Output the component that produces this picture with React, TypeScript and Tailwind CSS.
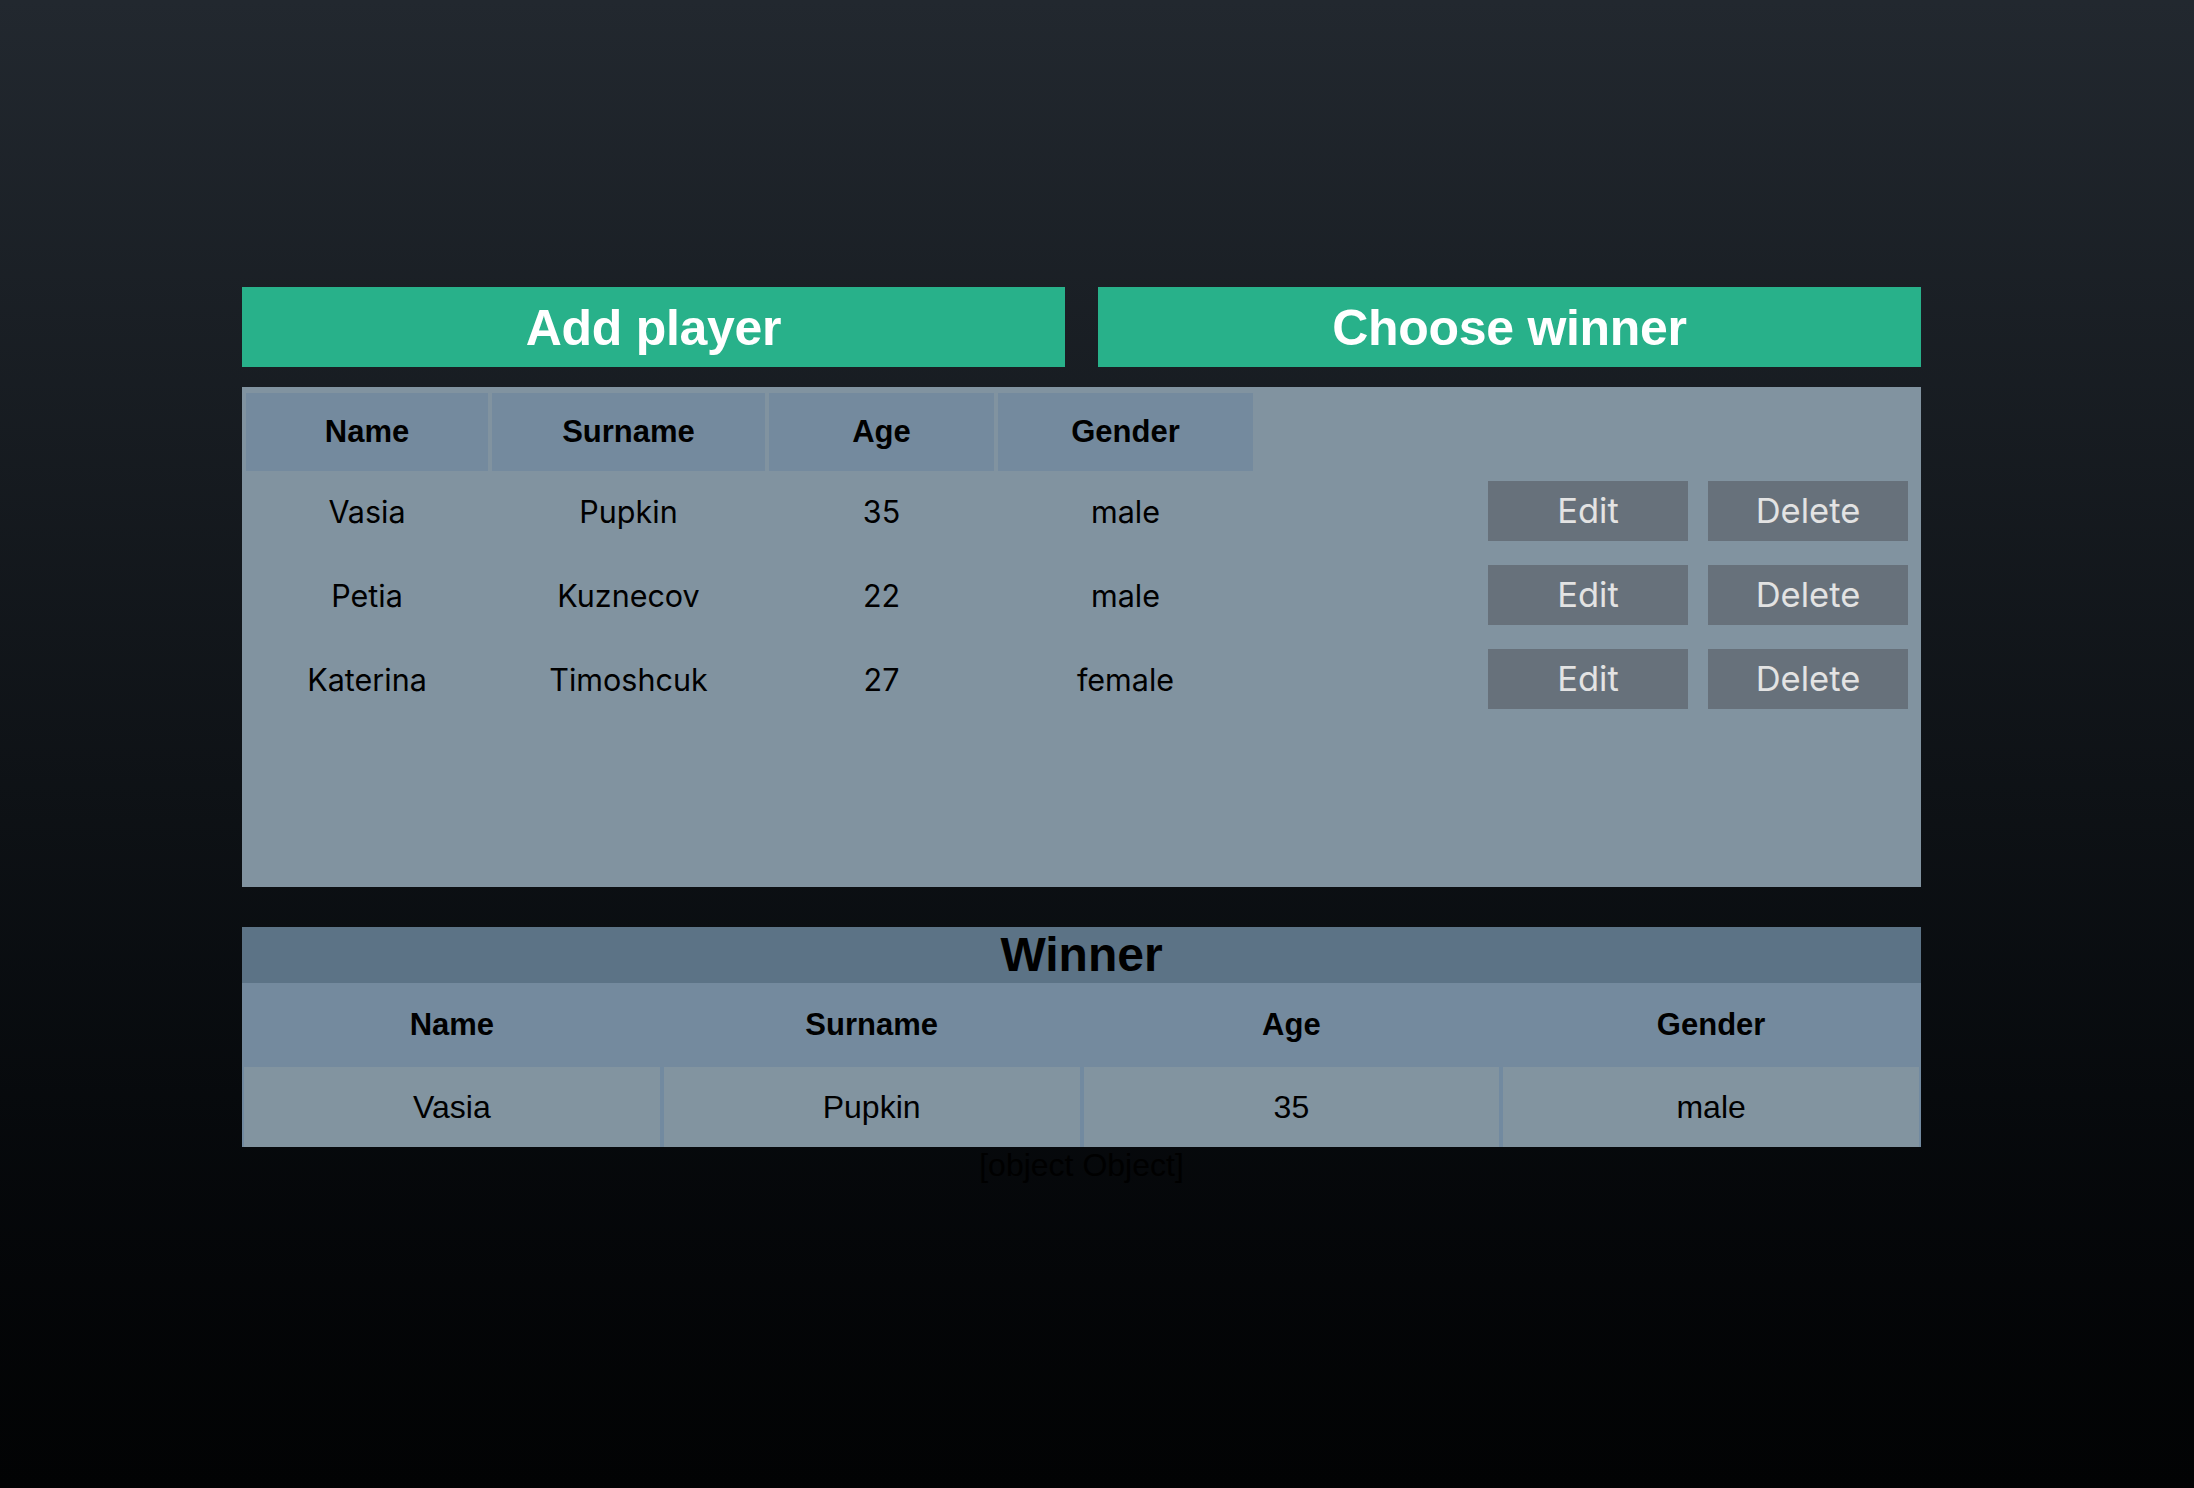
import React from "react";

const players = [
  { name: "Vasia", surname: "Pupkin", age: 35, gender: "male" },
  { name: "Petia", surname: "Kuznecov", age: 22, gender: "male" },
  { name: "Katerina", surname: "Timoshcuk", age: 27, gender: "female" },
];

const helv = { fontFamily: '"Liberation Sans", Arial, sans-serif' } as React.CSSProperties;

export default function App() {
  return (
    <div
      className="min-h-screen w-full bg-linear-to-b from-[#22282f] to-[#020304] pt-[287px] pb-[200px] font-['Liberation_Sans',Arial,sans-serif]"
    >
      <div className="ml-[242px] w-[1679px]">
        {/* Top buttons */}
        <div className="flex h-[80px] gap-[33px]">
          <button className="flex-1 bg-[#28b18a] pt-[2px] text-[50px] font-bold text-white leading-none tracking-[-0.3px]">
            Add player
          </button>
          <button className="flex-1 bg-[#28b18a] pt-[2px] text-[50px] font-bold text-white leading-none tracking-[-0.3px]">
            Choose winner
          </button>
        </div>

        {/* Players table */}
        <div className="mt-[20px] h-[500px] bg-[#8193a0] p-[4px]">
          <div className="flex h-[80px] gap-[4px] pt-[2px] text-[31px] font-bold text-black">
            <div className="flex w-[242px] items-center justify-center bg-[#748a9e]">Name</div>
            <div className="flex w-[273px] items-center justify-center bg-[#748a9e]">Surname</div>
            <div className="flex w-[225px] items-center justify-center bg-[#748a9e]">Age</div>
            <div className="flex w-[255px] items-center justify-center bg-[#748a9e]">Gender</div>
          </div>
          <div className="flex flex-col gap-[4px]">
            {players.map((p) => (
              <div key={p.name} className="flex h-[80px] items-center gap-[4px] text-black">
                <div className="w-[242px] pt-[2px] text-center font-['Inter',sans-serif] text-[30.5px]">{p.name}</div>
                <div className="w-[273px] pt-[2px] text-center font-['Inter',sans-serif] text-[30.5px]">{p.surname}</div>
                <div className="w-[225px] pt-[2px] text-center font-['Inter',sans-serif] text-[30.5px]">{p.age}</div>
                <div className="w-[255px] pt-[2px] text-center font-['Inter',sans-serif] text-[30.5px]">{p.gender}</div>
                <div className="ml-auto mr-[9px] flex gap-[20px]">
                  <button className="h-[60px] w-[200px] bg-[#67717b] font-['Inter',sans-serif] text-[34.5px] text-[#e3e3e3]">
                    Edit
                  </button>
                  <button className="h-[60px] w-[200px] bg-[#67717b] font-['Inter',sans-serif] text-[34.5px] text-[#e3e3e3]">
                    Delete
                  </button>
                </div>
              </div>
            ))}
          </div>
        </div>

        {/* Winner */}
        <div className="mt-[40px]" style={helv}>
          <div className="flex h-[56px] items-center justify-center bg-[#5c7386] text-[48px] font-bold text-black leading-none">
            Winner
          </div>
          <div className="flex h-[84px] items-center bg-[#748a9e] text-[31px] font-bold text-black">
            <div className="flex-1 text-center">Name</div>
            <div className="flex-1 text-center">Surname</div>
            <div className="flex-1 text-center">Age</div>
            <div className="flex-1 text-center">Gender</div>
          </div>
          <div className="flex h-[80px] gap-[4px] bg-[#728aa0] px-[2px] text-[32px] text-black">
            <div className="flex flex-1 items-center justify-center bg-[#8294a0]">Vasia</div>
            <div className="flex flex-1 items-center justify-center bg-[#8294a0]">Pupkin</div>
            <div className="flex flex-1 items-center justify-center bg-[#8294a0]">35</div>
            <div className="flex flex-1 items-center justify-center bg-[#8294a0]">male</div>
          </div>
        </div>
        <div className="text-center text-[32px] leading-[36px] text-black" style={helv}>
          [object Object]
        </div>
      </div>
    </div>
  );
}
